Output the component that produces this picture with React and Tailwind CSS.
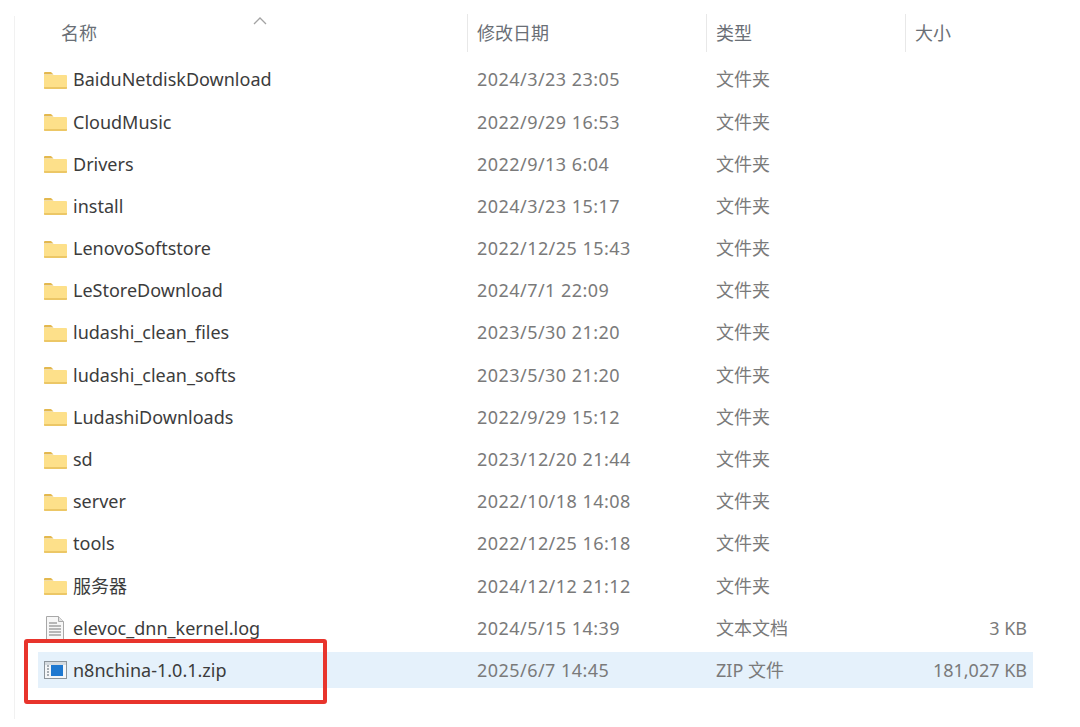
import React from 'react';

const files = [
  { name: 'BaiduNetdiskDownload', date: '2024/3/23 23:05', type: '文件夹', size: '' },
  { name: 'CloudMusic', date: '2022/9/29 16:53', type: '文件夹', size: '' },
  { name: 'Drivers', date: '2022/9/13 6:04', type: '文件夹', size: '' },
  { name: 'install', date: '2024/3/23 15:17', type: '文件夹', size: '' },
  { name: 'LenovoSoftstore', date: '2022/12/25 15:43', type: '文件夹', size: '' },
  { name: 'LeStoreDownload', date: '2024/7/1 22:09', type: '文件夹', size: '' },
  { name: 'ludashi_clean_files', date: '2023/5/30 21:20', type: '文件夹', size: '' },
  { name: 'ludashi_clean_softs', date: '2023/5/30 21:20', type: '文件夹', size: '' },
  { name: 'LudashiDownloads', date: '2022/9/29 15:12', type: '文件夹', size: '' },
  { name: 'sd', date: '2023/12/20 21:44', type: '文件夹', size: '' },
  { name: 'server', date: '2022/10/18 14:08', type: '文件夹', size: '' },
  { name: 'tools', date: '2022/12/25 16:18', type: '文件夹', size: '' },
  { name: '服务器', date: '2024/12/12 21:12', type: '文件夹', size: '' },
  { name: 'elevoc_dnn_kernel.log', date: '2024/5/15 14:39', type: '文本文档', size: '3 KB', icon: 'text' },
  { name: 'n8nchina-1.0.1.zip', date: '2025/6/7 14:45', type: 'ZIP 文件', size: '181,027 KB', icon: 'zip', selected: true },
];

const FolderIcon = () => (
  <svg width="23" height="18" viewBox="0 0 23 18">
    <path d="M0 2q0-1 1-1h6l2.500 2.500H0z" fill="#e3b84e" />
    <path d="M0 4h22q1 0 1 1v12q0 1-1 1H1q-1 0-1-1z" fill="#fde08a" />
    <path d="M0 16h23v1q0 1-1 1H1q-1 0-1-1z" fill="#ecc766" />
  </svg>
);

const TextIcon = () => (
  <svg width="18" height="24" viewBox="0 0 18 24">
    <path d="M.5.5h12l5 5v18H.5z" fill="#f7f7f7" stroke="#a8a8a8" />
    <path d="M12.500.5v5h5" fill="#e2e2e2" stroke="#a8a8a8" />
    <path d="M3 7h8M3 10h12M3 13h12M3 16h12M3 19h12" stroke="#a2a2a2" strokeWidth="1.400" />
  </svg>
);

const ZipIcon = () => (
  <svg width="23" height="18" viewBox="0 0 23 18">
    <rect x=".5" y=".5" width="22" height="17" fill="#f4f6f8" stroke="#8c959c" />
    <path d="M1 1h21v3H1z" fill="#d5dbe0" />
    <rect x="7" y="4" width="12" height="11" fill="#1e78d0" />
    <path d="M3 5h2M3 8h2M3 11h2M3 14h2" stroke="#8c959c" strokeWidth="1.500" />
  </svg>
);

const FileIcon = ({ icon }) => {
  if (icon === 'text') return <TextIcon />;
  if (icon === 'zip') return <ZipIcon />;
  return <FolderIcon />;
};

const rowCols = 'grid grid-cols-[429px_239px_199px_128px] items-center';

export default function App() {
  return (
    <div className="relative h-[727px] w-[1080px] overflow-hidden bg-white pl-[38px] pt-[14px] font-['Noto_Sans','Noto_Sans_CJK_SC',sans-serif] text-[18px]">
      {/* faint window edge */}
      <div className="absolute bottom-[8px] left-[14px] top-[16px] w-px bg-[#f1f1f1]"></div>

      <div className={`${rowCols} h-[38px] text-[#6a6f76]`}>
        <div className="relative pl-[23px]">
          名称
          <svg className="absolute left-[215px] top-[-3px]" width="14" height="8" viewBox="0 0 14 8" fill="none">
            <path d="M1 7l6-6 6 6" stroke="#a3a3a3" strokeWidth="1.300" />
          </svg>
        </div>
        <div className="flex h-full items-center border-l border-[#e8e8e8] pl-[9px]">修改日期</div>
        <div className="flex h-full items-center border-l border-[#e8e8e8] pl-[9px]">类型</div>
        <div className="flex h-full items-center border-l border-[#e8e8e8] pl-[9px]">大小</div>
      </div>

      <div className="mt-[6.750px]">
        {files.map((file) => (
          <div key={file.name} className="flex h-[42.2px] items-center">
            <div className={`${rowCols} h-[36px] w-[995px] ${file.selected ? 'bg-[#e5f1fb]' : ''}`}>
              <div className="flex items-center">
                <div className={`flex w-[35px] justify-start ${file.icon === 'text' ? 'pl-[8px]' : 'pl-[6px]'}`}>
                  <FileIcon icon={file.icon} />
                </div>
                <span className="text-[#3c3c3c]">{file.name}</span>
              </div>
              <div className="pl-[10px] tracking-[0.45px] text-[#7a7a7a]">{file.date}</div>
              <div className="pl-[10px] text-[#7a7a7a]">{file.type}</div>
              <div className="pr-[6px] text-right text-[#7a7a7a]">{file.size}</div>
            </div>
          </div>
        ))}
      </div>

      {/* red annotation box */}
      <div className="absolute left-[24px] top-[639px] h-[65px] w-[303px] rounded-[3px] border-[4px] border-[#e8342c]"></div>
    </div>
  );
}
